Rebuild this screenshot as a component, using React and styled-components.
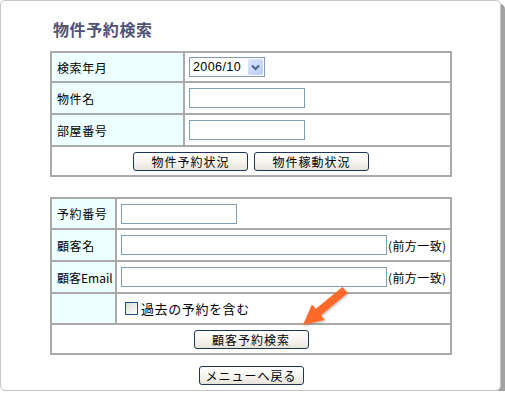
import React from 'react';
import styled, { createGlobalStyle } from 'styled-components';

const GlobalStyle = createGlobalStyle`
  html, body {
    margin: 0;
    padding: 0;
    background: #fff;
  }
  body {
    font-family: "Noto Sans CJK JP", "Liberation Sans", sans-serif;
    font-size: 12px;
    color: #000;
  }
`;

const Frame = styled.div`
  position: relative;
  box-sizing: border-box;
  width: 501px;
  height: 391px;
  border: 1px solid #c4c4c4;
  border-radius: 5px;
  box-shadow: 4px 4px 0 0 #a2a2a2;
  padding: 18px 0 0 49px;
  background: #fff;
`;

const Title = styled.h1`
  margin: 0 0 12px 3px;
  height: 20px;
  line-height: 20px;
  font-size: 16px;
  font-weight: bold;
  letter-spacing: 0.6px;
  color: #505276;
`;

const Panel = styled.div`
  display: grid;
  grid-template-columns: ${(p) => p.$labelWidth}px 1fr;
  gap: 2px;
  padding: 2px;
  width: 402px;
  box-sizing: border-box;
  background: #aaaaaa;
  margin-bottom: ${(p) => p.$spaceAfter || 0}px;
`;

const Label = styled.div`
  height: ${(p) => p.$h}px;
  background: #eeffff;
  display: flex;
  align-items: center;
  padding-left: 5px;
  letter-spacing: ${(p) => (p.$tight ? 0 : 0.6)}px;
  white-space: nowrap;
  overflow: hidden;
`;

const Value = styled.div`
  height: ${(p) => p.$h}px;
  background: #fff;
  display: flex;
  align-items: center;
  padding-left: 4px;
  letter-spacing: 0.6px;
  white-space: nowrap;
`;

const ButtonRow = styled.div`
  grid-column: 1 / -1;
  height: ${(p) => p.$h}px;
  background: #fff;
  display: flex;
  align-items: center;
  justify-content: center;
  gap: 6px;
`;

const Button = styled.button`
  box-sizing: border-box;
  width: ${(p) => p.$w}px;
  height: 19px;
  padding: 0;
  border: 1px solid #1d3657;
  border-radius: 3px;
  background: linear-gradient(#ffffff 0%, #f6f5f0 50%, #e6e4da 100%);
  font-family: "Noto Sans CJK JP", "Liberation Sans", sans-serif;
  font-size: 12px;
  letter-spacing: 1px;
  line-height: 17px;
  color: #000;
  cursor: pointer;
`;

const TextInput = styled.input`
  box-sizing: border-box;
  width: ${(p) => p.$w}px;
  height: 20px;
  margin: 0;
  padding: 1px 3px;
  border: 1px solid #7f9db9;
  font-family: "Liberation Sans", sans-serif;
  font-size: 12px;
  outline: none;
`;

const SelectBox = styled.div`
  box-sizing: border-box;
  display: flex;
  align-items: stretch;
  width: 76px;
  height: 20px;
  border: 1px solid #7f9db9;
  background: #fff;
`;

const Select = styled.select`
  appearance: none;
  flex: 1;
  min-width: 0;
  border: none;
  margin: 0;
  padding: 0 0 0 3px;
  background: transparent;
  font-family: "Liberation Sans", sans-serif;
  font-size: 12.5px;
  letter-spacing: 0.4px;
  color: #000;
  outline: none;
`;

const DropButton = styled.span`
  width: 15px;
  margin: 1px;
  border-radius: 2px;
  background: linear-gradient(135deg, #dbe5fd 0%, #b9cbf7 100%);
  display: flex;
  align-items: center;
  justify-content: center;
`;

const Note = styled.span`
  margin-left: 1px;
  letter-spacing: 0.4px;
`;

const CheckLabel = styled.label`
  display: flex;
  align-items: center;
  gap: 3px;
  padding-left: 4px;
  font-size: 13px;
  letter-spacing: 0.6px;
`;

const Check = styled.input`
  appearance: none;
  box-sizing: border-box;
  width: 13px;
  height: 13px;
  margin: 0;
  border: 1px solid #1c5180;
  background: linear-gradient(135deg, #dcdcd6 0%, #ffffff 100%);
`;

const Footer = styled.div`
  width: 402px;
  display: flex;
  justify-content: center;
  margin-top: 11px;
`;

const Pointer = styled.svg`
  position: absolute;
  left: 297px;
  top: 281px;
  pointer-events: none;
`;

export default function App() {
  return (
    <>
      <GlobalStyle />
      <Frame>
        <Title>物件予約検索</Title>

        <Panel $labelWidth={131} $spaceAfter={20}>
          <Label $h={28}>検索年月</Label>
          <Value $h={28}>
            <SelectBox>
              <Select defaultValue="2006/10">
                <option>2006/09</option>
                <option>2006/10</option>
                <option>2006/11</option>
              </Select>
              <DropButton>
                <svg width="9" height="7" viewBox="0 0 9 7">
                  <path d="M1 1.5 L4.5 5 L8 1.5" fill="none" stroke="#4d6185" strokeWidth="2" />
                </svg>
              </DropButton>
            </SelectBox>
          </Value>
          <Label $h={30}>物件名</Label>
          <Value $h={30}>
            <TextInput $w={116} />
          </Value>
          <Label $h={30}>部屋番号</Label>
          <Value $h={30}>
            <TextInput $w={116} />
          </Value>
          <ButtonRow $h={28}>
            <Button $w={115}>物件予約状況</Button>
            <Button $w={115}>物件稼動状況</Button>
          </ButtonRow>
        </Panel>

        <Panel $labelWidth={63}>
          <Label $h={29}>予約番号</Label>
          <Value $h={29}>
            <TextInput $w={116} />
          </Value>
          <Label $h={30}>顧客名</Label>
          <Value $h={30}>
            <TextInput $w={266} />
            <Note>(前方一致)</Note>
          </Value>
          <Label $h={30} $tight>顧客Email</Label>
          <Value $h={30}>
            <TextInput $w={266} />
            <Note>(前方一致)</Note>
          </Value>
          <Label $h={29} />
          <Value $h={29}>
            <CheckLabel>
              <Check type="checkbox" />
              過去の予約を含む
            </CheckLabel>
          </Value>
          <ButtonRow $h={28}>
            <Button $w={115}>顧客予約検索</Button>
          </ButtonRow>
        </Panel>

        <Footer>
          <Button $w={105}>メニューへ戻る</Button>
        </Footer>

        <Pointer width="60" height="55" viewBox="0 0 60 55">
          <defs>
            <filter id="glow" x="-20%" y="-20%" width="140%" height="140%">
              <feDropShadow dx="1" dy="1" stdDeviation="1.2" floodColor="#7a6a60" floodOpacity="0.5" />
            </filter>
          </defs>
          <polygon
            points="5,43 26.7,37.9 22.9,33.3 49.6,11.1 44.4,4.9 17.7,27.1 13.9,22.5"
            fill="#ff6a2c"
            strokeLinejoin="round"
            filter="url(#glow)"
          />
        </Pointer>
      </Frame>
    </>
  );
}
